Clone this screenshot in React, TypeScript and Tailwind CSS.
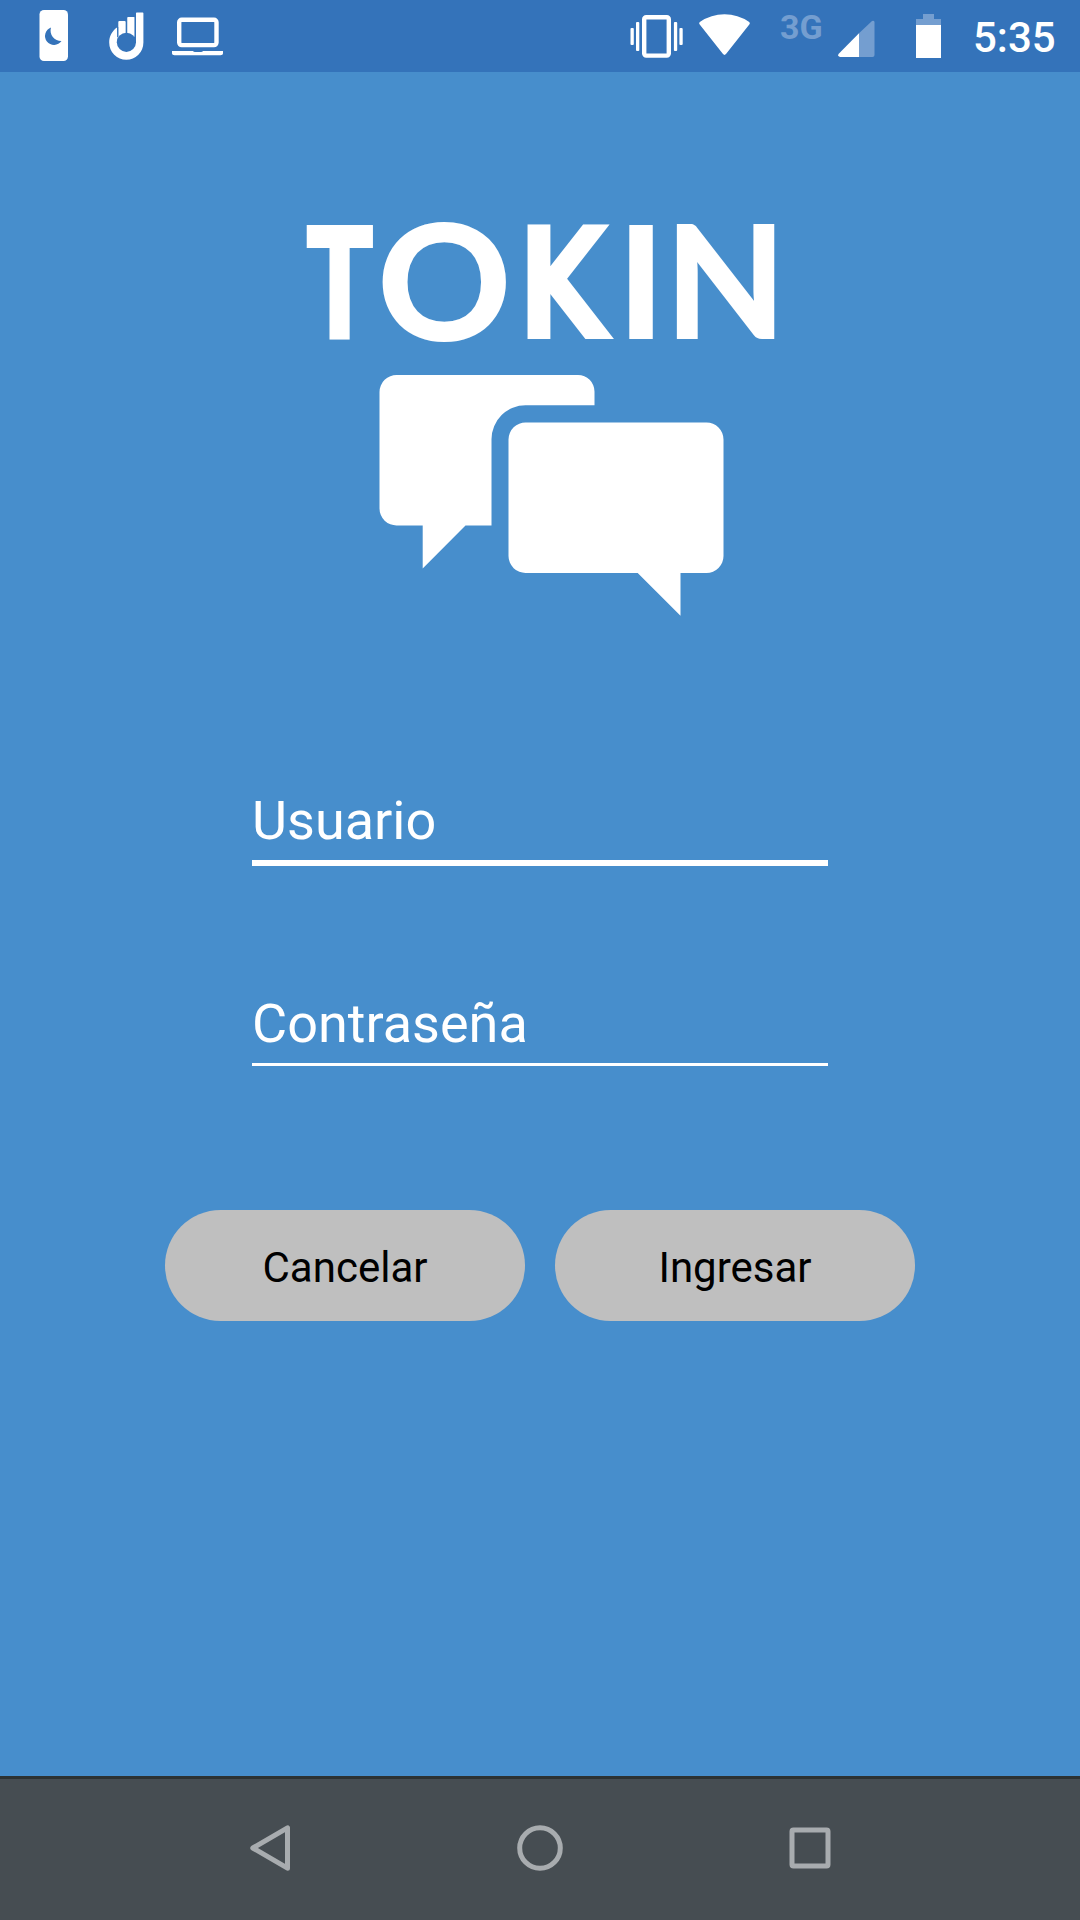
import React from 'react';

/**
 * Barra de estado de Android
 */
const StatusBar: React.FC = () => (
  <header className="flex h-[72px] w-full items-start bg-[#3473ba] text-white">
    {/* Notificaciones */}
    <svg className="mt-[10px] ml-[39px] shrink-0" width="29" height="51" viewBox="0 0 29 51">
      <rect x="0.5" width="28.5" height="51" rx="4.5" fill="#fff" />
      <path d="M12 17.5A9 9 0 1 0 22.5 31A10.5 10.5 0 0 1 12 17.5Z" fill="#3473ba" />
    </svg>
    <svg className="mt-[12px] ml-[41px] shrink-0" width="35" height="48" viewBox="0 0 35 48">
      <path
        d="M8 15.6C3 19 .2 24.5 .2 30.6a17.1 17.1 0 0 0 34.2 0V1.2Q34.4.5 33.7.5H27.7Q27 .5 27 1.2V31H9z"
        fill="#fff"
      />
      <rect x="9.3" y="9" width="7.4" height="20" rx="1" fill="#fff" />
      <rect x="18.2" y="5" width="7.4" height="20" rx="1" fill="#fff" />
      <circle cx="17.4" cy="30.3" r="9.6" fill="#3473ba" />
      <path d="M8.7 15V25M17.5 6V22M26.3 6V26" stroke="#3473ba" strokeWidth="1.1" />
    </svg>
    <svg className="mt-[17px] ml-[28px] shrink-0" width="51" height="39" viewBox="0 0 51 39">
      <rect x="7.2" y="2.7" width="37.3" height="25.4" rx="2.5" fill="none" stroke="#fff" strokeWidth="4.4" />
      <path d="M0 34H21Q21.5 35 23 35H29Q30.5 35 31 34H51V36.5Q51 38.3 48.5 38.3H2.5Q0 38.3 0 36.5Z" fill="#fff" />
    </svg>

    {/* Iconos del sistema */}
    <svg className="mt-[15px] ml-auto shrink-0" width="53" height="43" viewBox="0 0 53 43" fill="#fff">
      <rect x="14.2" y="2.2" width="24.6" height="38.4" rx="2" fill="none" stroke="#fff" strokeWidth="4.4" />
      <rect x="6" y="7" width="3.3" height="29" rx="1" />
      <rect x="0.5" y="13" width="3.3" height="17" rx="1" />
      <rect x="43.9" y="7" width="3.3" height="29" rx="1" />
      <rect x="49.4" y="13" width="3.3" height="17" rx="1" />
    </svg>
    <svg className="mt-[14px] ml-[16px] shrink-0" width="51" height="42" viewBox="0 0 51 42">
      <path
        d="M.7 10.6Q-.6 9 1.2 7.8Q12 .2 25.5 .2T49.8 7.8Q51.6 9 50.3 10.6L27.2 39.8Q25.5 42 23.8 39.8Z"
        fill="#fff"
      />
    </svg>
    <span className="mt-[7px] ml-[30px] w-[44px] shrink-0 font-['Roboto',sans-serif] text-[34px] leading-[40px] font-bold whitespace-nowrap text-[#749ed0]">
      3G
    </span>
    <svg className="mt-[20px] ml-[14px] shrink-0" width="37" height="38" viewBox="0 0 37 38">
      <path d="M21 13.2V37H34.5Q36.5 37 36.5 35V2Q36 .2 34 1Z" fill="#749ed0" />
      <path d="M21 13.2V37H2Q-.5 36.5 .5 34Z" fill="#fff" />
    </svg>
    <svg className="mt-[14px] ml-[41px] shrink-0" width="25" height="44" viewBox="0 0 25 44">
      <path d="M7 0H18V5H25V11H0V5H7Z" fill="#749ed0" />
      <path d="M0 11H25V44H0Z" fill="#fff" />
    </svg>
    <span className="mt-[13px] mr-[25px] ml-[32px] w-[82px] shrink-0 font-['Roboto',sans-serif] text-[42px] leading-[49px] font-medium whitespace-nowrap">
      5:35
    </span>
  </header>
);

interface LogoLetter {
  char: string;
  x: number;
  y: number;
  scale: number;
  stroke: number;
  className: string;
}

const letters: LogoLetter[] = [
  { char: 'T', x: -1.5, y: 128, scale: 0.69, stroke: 2, className: "font-['Roboto',sans-serif] text-[158px] font-black" },
  { char: 'O', x: 70.5, y: 129.5, scale: 1.04, stroke: 2, className: "font-['Lato',sans-serif] text-[159px] font-bold" },
  { char: 'K', x: 209.5, y: 129, scale: 0.77, stroke: 0, className: "font-['DejaVu_Sans',sans-serif] text-[157px] font-bold" },
  { char: 'I', x: 312, y: 129, scale: 1, stroke: 0, className: "font-['Inter',sans-serif] text-[157px] font-bold" },
  { char: 'N', x: 358, y: 129, scale: 0.985, stroke: 0, className: "font-['Lato',sans-serif] text-[159px] font-black" },
];

/**
 * Logotipo: nombre y dos burbujas de chat
 */
const Logo: React.FC = () => (
  <svg className="mt-[78px] shrink-0" width="540" height="480" viewBox="-37 -60 540 480" fill="#fff">
    {letters.map(({ char, x, y, scale, stroke, className }) => (
      <text
        key={char}
        transform={`translate(${x} ${y}) scale(${scale} 1)`}
        stroke="#fff"
        strokeWidth={stroke}
        className={className}
      >
        {char}
      </text>
    ))}
    <path d="M90 165H271A16.5 16.5 0 0 1 287.5 181.5V195.3H219A34 34 0 0 0 184.5 229.3V315.5H158.5L115.7 358.5V315.5H90A17 17 0 0 1 72.5 298.5V182A17 17 0 0 1 90 165Z" />
    <path d="M219 212.5H399.5A17 17 0 0 1 416.5 229.5V346A17 17 0 0 1 399.5 363H373.5V405.7L330.7 363H219A17 17 0 0 1 201.5 346V229.5A17 17 0 0 1 219 212.5Z" />
  </svg>
);

const LoginForm: React.FC = () => (
  <form className="flex w-full flex-col items-center font-['Roboto',sans-serif]">
    <label className="mt-[150px] h-[86px] w-[576px] border-b-[6px] border-white text-[54px] leading-[82px] text-white">
      Usuario
    </label>
    <label className="mt-[117px] h-[83px] w-[576px] border-b-[3px] border-white text-[54px] leading-[82px] text-white">
      Contraseña
    </label>
    <div className="mt-[144px] flex gap-[30px]">
      <button
        type="button"
        className="h-[111px] w-[360px] rounded-full bg-[#bfbfbf] pt-1 text-[42px] leading-none text-black"
      >
        Cancelar
      </button>
      <button
        type="button"
        className="h-[111px] w-[360px] rounded-full bg-[#bfbfbf] pt-1 text-[42px] leading-none text-black"
      >
        Ingresar
      </button>
    </div>
  </form>
);

/**
 * Barra de navegación inferior
 */
const NavigationBar: React.FC = () => (
  <nav className="mt-auto flex h-[144px] w-full items-center justify-center gap-[210px] border-t-[3px] border-[#2c3233] bg-[#464d52] pb-[3px]">
    <svg width="60" height="60" viewBox="0 0 60 60" fill="none" stroke="#a8acaf" strokeWidth="5" strokeLinejoin="round">
      <path d="M12.8 30L47.5 9.8V50.2Z" />
    </svg>
    <svg width="60" height="60" viewBox="0 0 60 60" fill="none" stroke="#a8acaf" strokeWidth="5">
      <circle cx="30" cy="30" r="20.3" />
    </svg>
    <svg width="60" height="60" viewBox="0 0 60 60" fill="none" stroke="#a8acaf" strokeWidth="5">
      <rect x="12" y="12" width="36" height="36" rx="1.5" />
    </svg>
  </nav>
);

const App: React.FC = () => {
  return (
    <div className="flex h-[1920px] w-[1080px] flex-col items-center overflow-hidden bg-[#478ecc]">
      <StatusBar />
      <Logo />
      <LoginForm />
      <NavigationBar />
    </div>
  );
};

export default App;
